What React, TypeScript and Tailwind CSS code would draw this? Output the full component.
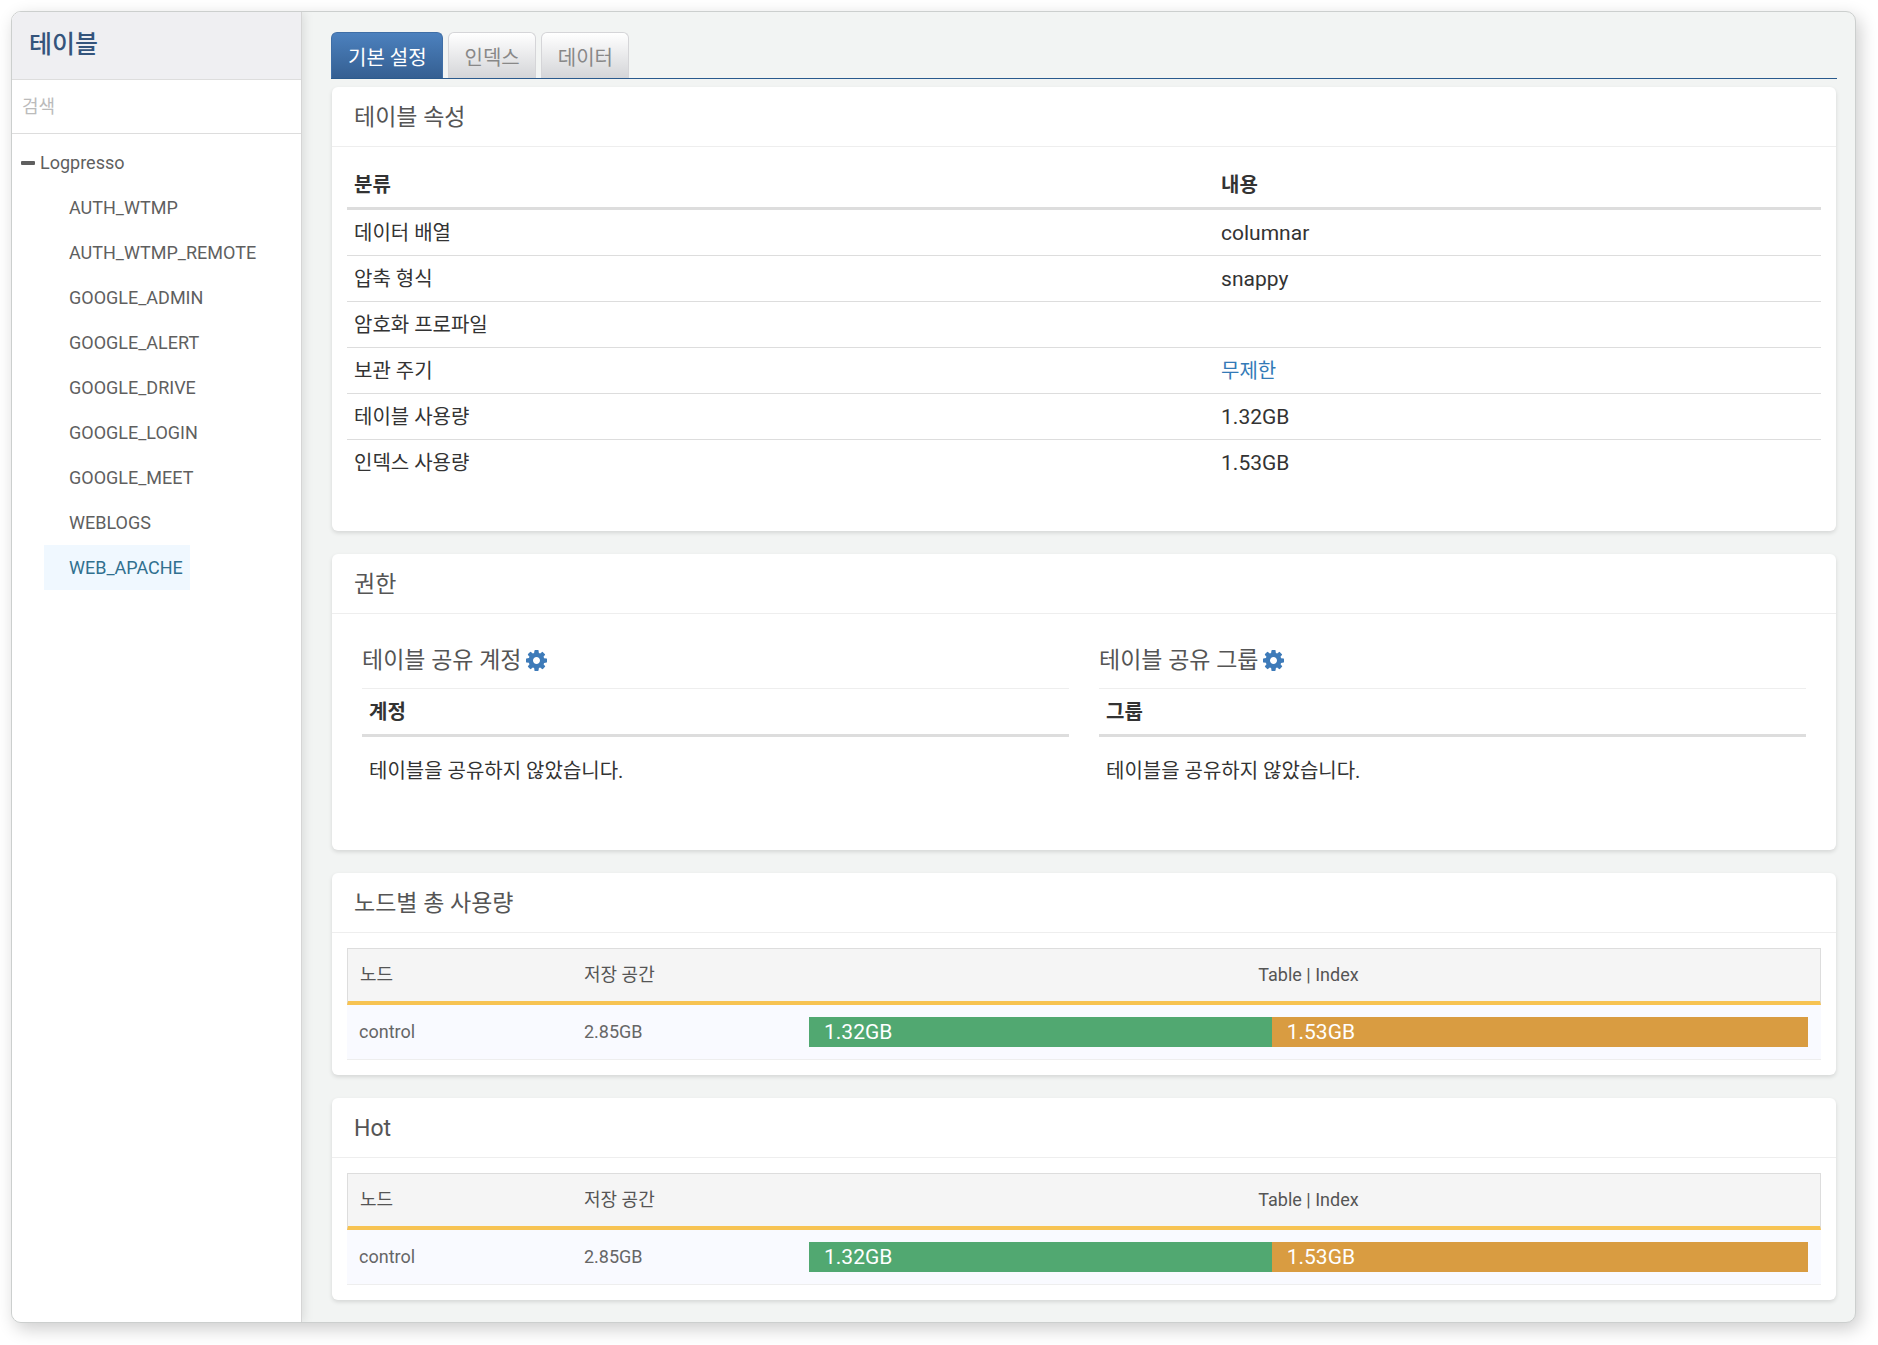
import React, { useState } from "react";

const tabs = ["기본 설정", "인덱스", "데이터"];

const tables = [
  "AUTH_WTMP",
  "AUTH_WTMP_REMOTE",
  "GOOGLE_ADMIN",
  "GOOGLE_ALERT",
  "GOOGLE_DRIVE",
  "GOOGLE_LOGIN",
  "GOOGLE_MEET",
  "WEBLOGS",
  "WEB_APACHE",
];

const properties = [
  { name: "데이터 배열", value: "columnar" },
  { name: "압축 형식", value: "snappy" },
  { name: "암호화 프로파일", value: "" },
  { name: "보관 주기", value: "무제한", link: true },
  { name: "테이블 사용량", value: "1.32GB" },
  { name: "인덱스 사용량", value: "1.53GB" },
];

const nodes = [{ name: "control", total: 2.85, table: 1.32, index: 1.53 }];

function CogIcon() {
  return (
    <svg viewBox="128 128 1536 1536" className="size-[21px]" fill="currentColor" aria-hidden="true">
      <path d="M1152 896q0-106-75-181t-181-75-181 75-75 181 75 181 181 75 181-75 75-181zm512-109v222q0 12-8 23t-20 13l-185 28q-19 54-39 91 35 50 107 138 10 12 10 25t-9 23q-27 37-99 108t-94 71q-12 0-26-9l-138-108q-44 23-91 38-16 136-29 186-7 28-36 28h-222q-14 0-24.5-8.5t-11.5-21.5l-28-184q-49-16-90-37l-141 107q-10 9-25 9-14 0-25-11-126-114-165-168-7-10-7-23 0-12 8-23 15-21 51-66.5t54-70.5q-27-50-41-99l-183-27q-13-2-21-12.5t-8-23.5v-222q0-12 8-23t19-13l186-28q14-46 39-92-40-57-107-138-10-12-10-24 0-10 9-23 26-36 98.5-107.5t94.5-71.5q13 0 26 10l138 107q44-23 91-38 16-136 29-186 7-28 36-28h222q14 0 24.5 8.5t11.5 21.5l28 184q49 16 90 37l142-107q9-9 24-9 13 0 25 10 129 119 165 170 7 8 7 22 0 12-8 23-15 21-51 66.5t-54 70.5q26 50 41 98l183 28q13 2 21 12.5t8 23.5z" />
    </svg>
  );
}

function Card({ title, children }: { title: string; children: React.ReactNode }) {
  return (
    <section className="rounded-[6px] bg-white shadow-[0_2px_4px_rgba(0,0,0,0.12)]">
      <h2 className="flex h-[60px] items-center border-b border-[#eeeeee] px-[22px] pt-[3px] text-[23px] text-[#555555]">{title}</h2>
      {children}
    </section>
  );
}

function SharePanel({ title, column }: { title: string; column: string }) {
  return (
    <div className="flex-1">
      <div className="flex h-[57px] items-center gap-1 border-b border-[#eeeeee] text-[23px] text-[#555555]">
        <h3 className="pt-[2px]">{title}</h3>
        <button type="button" aria-label={title + " 설정"} className="text-[#3e7bb9]">
          <CogIcon />
        </button>
      </div>
      <table className="w-full border-separate border-spacing-0 text-left">
        <thead>
          <tr className="h-12">
            <th className="border-b-[3px] border-[#dddddd] px-[7px] font-bold">{column}</th>
          </tr>
        </thead>
        <tbody>
          <tr className="h-[68px]">
            <td className="px-[7px]">테이블을 공유하지 않았습니다.</td>
          </tr>
        </tbody>
      </table>
    </div>
  );
}

function UsageTable() {
  return (
    <div className="p-[15px]">
      <table className="w-full table-fixed border-separate border-spacing-0 text-left text-[18px] text-[#666666]">
        <thead>
          <tr className="h-[57px] bg-[#f5f5f5] text-[#555555]">
            <th className="w-[225px] border-t border-b-4 border-l border-t-[#dddddd] border-b-[#f7c352] border-l-[#dddddd] px-3 font-normal">노드</th>
            <th className="w-[225px] border-t border-b-4 border-t-[#dddddd] border-b-[#f7c352] px-3 font-normal">저장 공간</th>
            <th className="border-t border-r border-b-4 border-t-[#dddddd] border-r-[#dddddd] border-b-[#f7c352] px-3 text-center font-normal">Table | Index</th>
          </tr>
        </thead>
        <tbody>
          {nodes.map((n) => (
            <tr key={n.name} className="h-[55px] bg-[#f9faff]">
              <td className="border-b border-[#eeeeee] px-3">{n.name}</td>
              <td className="border-b border-[#eeeeee] px-3">{n.total}GB</td>
              <td className="border-b border-[#eeeeee] pr-[13px] pl-3">
                <div className="flex h-[30px] text-[21px] leading-[30px] text-white">
                  <div className="bg-[#51a871] px-[15px]" style={{ width: (n.table / n.total) * 100 + "%" }}>{n.table}GB</div>
                  <div className="flex-1 bg-[#d99c41] px-[15px]">{n.index}GB</div>
                </div>
              </td>
            </tr>
          ))}
        </tbody>
      </table>
    </div>
  );
}

export default function App() {
  const [tab, setTab] = useState(0);
  const [selected, setSelected] = useState("WEB_APACHE");
  const [query, setQuery] = useState("");

  return (
    <div className="min-h-screen bg-white pt-[11px] pr-[22px] pb-[22px] pl-[11px] font-[Roboto,'Noto_Sans_CJK_KR',sans-serif] text-[20px] leading-[30px] text-[#333333]">
      <div className="flex min-h-[calc(100vh-33px)] overflow-hidden rounded-[10px] border border-[#cccfce] bg-[#f2f4f3] shadow-[4px_6px_18px_rgba(0,0,0,0.2)]">
        <aside className="w-[290px] shrink-0 border-r border-[#d5d5d5] bg-white text-[18px] text-[#5f5f5f] shadow-[2px_0_10px_rgba(0,0,0,0.1)]">
          <h1 className="flex h-[68px] items-center border-b border-[#dddddd] bg-[#efeff2] px-[17px] pb-[2px] text-[25px] font-medium text-[#34547c]">테이블</h1>
          <input
            type="search"
            aria-label="검색"
            placeholder="검색"
            value={query}
            onChange={(e) => setQuery(e.target.value)}
            className="block h-[54px] w-full border-b border-[#dddddd] px-[10px] text-[18px] outline-none placeholder:text-[#bbbbbb]"
          />
          <nav className="pt-[6px]">
            <button type="button" className="flex h-[45px] items-center gap-[5px] pl-[9px]">
              <svg viewBox="0 0 14 4" className="h-1 w-[14px]" fill="currentColor" aria-hidden="true">
                <rect width="14" height="4" rx="1" />
              </svg>
              Logpresso
            </button>
            <ul className="pl-8">
              {tables.filter((t) => t.includes(query.toUpperCase())).map((t) => (
                <li key={t}>
                  <button
                    type="button"
                    onClick={() => setSelected(t)}
                    className={t === selected ? "h-[45px] bg-[#f0f8ff] pr-[7px] pl-[25px] text-[#31708f]" : "h-[45px] pr-[7px] pl-[25px]"}
                  >
                    {t}
                  </button>
                </li>
              ))}
            </ul>
          </nav>
        </aside>

        <main className="min-w-0 flex-1 pt-5 pr-[18px] pb-5 pl-[29px]">
          <div role="tablist" className="flex gap-[5px] border-b border-[#2a5a8d]">
            {tabs.map((t, i) => (
              <button
                key={t}
                type="button"
                role="tab"
                aria-selected={i === tab}
                onClick={() => setTab(i)}
                className={
                  i === tab
                    ? "h-[46px] rounded-t-[6px] border border-b-0 border-[#3f6ea6] bg-linear-to-b from-[#4c81be] to-[#355f92] pt-1 pr-[15px] pl-4 text-white"
                    : "h-[46px] rounded-t-[6px] border border-b-0 border-[#d5d5d8] bg-linear-to-b from-white to-[#d4d5d8] pt-1 pr-[15px] pl-4 text-[#888888]"
                }
              >
                {t}
              </button>
            ))}
          </div>

          <div className="flex flex-col gap-[23px] px-px pt-2">
            <Card title="테이블 속성">
              <div className="px-[15px] pt-[15px] pb-[45px]">
                <table className="w-full table-fixed border-separate border-spacing-0 text-left">
                  <thead>
                    <tr className="h-12">
                      <th className="w-10/17 border-b-[3px] border-[#dddddd] px-[7px] font-bold">분류</th>
                      <th className="border-b-[3px] border-[#dddddd] px-[7px] font-bold">내용</th>
                    </tr>
                  </thead>
                  <tbody className="[&>tr:not(:last-child)>td]:border-b [&>tr>td]:border-[#dddddd]">
                    {properties.map((p) => (
                      <tr key={p.name} className="h-[46px]">
                        <td className="px-[7px]">{p.name}</td>
                        <td className="px-[7px] text-[21px]">
                          {p.link ? <a href="#retention" className="text-[20px] text-[#337ab7]">{p.value}</a> : p.value}
                        </td>
                      </tr>
                    ))}
                  </tbody>
                </table>
              </div>
            </Card>

            <Card title="권한">
              <div className="flex gap-[30px] px-[30px] pt-[18px] pb-[45px]">
                <SharePanel title="테이블 공유 계정" column="계정" />
                <SharePanel title="테이블 공유 그룹" column="그룹" />
              </div>
            </Card>

            <Card title="노드별 총 사용량">
              <UsageTable />
            </Card>

            <Card title="Hot">
              <UsageTable />
            </Card>
          </div>
        </main>
      </div>
    </div>
  );
}
